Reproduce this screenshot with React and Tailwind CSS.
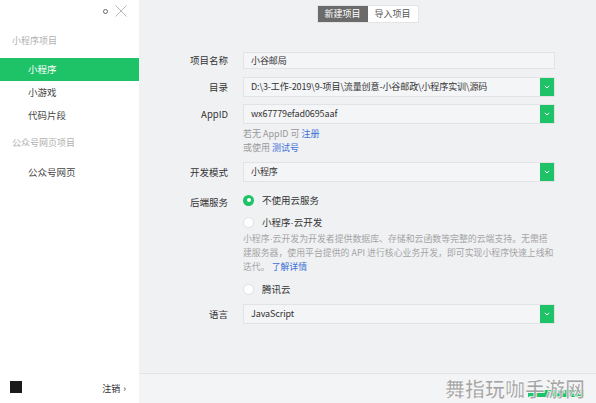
import React, { useState } from "react";

const font = { fontFamily: '"Noto Sans CJK SC", "Liberation Sans", sans-serif' };

function Chevron() {
  return (
    <svg width="6" height="4" viewBox="0 0 6 4" fill="none">
      <path d="M0.8 0.8 L3 3 L5.2 0.8" stroke="white" strokeWidth="1" />
    </svg>
  );
}

function Dot() {
  return <span style={{ fontFamily: '"Liberation Sans", sans-serif' }}>·</span>;
}

function Field({ value, dropdown, h = "h-[20px]" }) {
  return (
    <div className={`flex ${h} w-[312px] items-stretch border border-[#e2e3e5] bg-[#f4f5f6]`}>
      <div className="flex flex-1 items-center whitespace-nowrap pl-[7px] text-[9px] tracking-[-0.1px] text-[#333]">
        {value}
      </div>
      {dropdown && (
        <div className="flex w-[14px] items-center justify-center bg-[#1ec267]">
          <Chevron />
        </div>
      )}
    </div>
  );
}

function Row({ label, children, className = "" }) {
  return (
    <div className={`flex items-center ${className}`}>
      <div className="w-[90px] pr-[1px] text-right text-[9.5px] text-[#333]">{label}</div>
      <div className="ml-[14px]">{children}</div>
    </div>
  );
}

function Radio({ checked, label, onClick }) {
  return (
    <div className="flex h-[14px] cursor-pointer items-center" onClick={onClick}>
      {checked ? (
        <div className="flex h-[11px] w-[11px] items-center justify-center rounded-full bg-[#1ec267]">
          <div className="h-[4px] w-[4px] rounded-full bg-white" />
        </div>
      ) : (
        <div className="h-[11px] w-[11px] rounded-full border border-[#e0e0e0] bg-white" />
      )}
      <span className="ml-[8px] text-[9.5px] leading-[14px] text-[#333]">{label}</span>
    </div>
  );
}

export default function App() {
  const [backend, setBackend] = useState(0);
  const [tab, setTab] = useState(0);
  const [nav, setNav] = useState(0);

  const items = ["小程序", "小游戏", "代码片段"];

  return (
    <div className="flex h-[403px] w-[596px] overflow-hidden" style={font}>
      {/* sidebar */}
      <div className="flex w-[139px] flex-col bg-white">
        <div className="flex h-[22px] items-center justify-end pr-[12px]">
          <div className="h-[5px] w-[5px] rounded-full border border-[#666]" />
          <svg className="ml-[7px]" width="12" height="12" viewBox="0 0 12 12">
            <path d="M0.5 0.5 L11.5 11.5 M11.5 0.5 L0.5 11.5" stroke="#b5b5b5" strokeWidth="1" />
          </svg>
        </div>
        <div className="mt-[12px] pl-[12px] text-[9px] leading-[14px] text-[#b0b0b0]">小程序项目</div>
        <div className="mt-[10px] flex flex-col">
          {items.map((it, i) => (
            <div
              key={it}
              onClick={() => setNav(i)}
              className={`flex h-[23px] cursor-pointer items-center pl-[28px] text-[9.5px] ${
                nav === i ? "bg-[#1ec267] text-white" : "text-[#444]"
              }`}
            >
              {it}
            </div>
          ))}
        </div>
        <div className="mt-[9px] pl-[12px] text-[9px] leading-[14px] text-[#b0b0b0]">公众号网页项目</div>
        <div className="mt-[15px] pl-[28px] text-[9.5px] leading-[14px] text-[#444]">公众号网页</div>
        <div className="mt-auto mb-[8px] flex items-center justify-between pl-[10px] pr-[13px]">
          <div className="h-[12px] w-[12px] bg-[#1a1a1a]" />
          <div className="mt-[2px] flex items-center text-[9px] text-[#333]">
            注销<span className="ml-[3px] text-[9px]">›</span>
          </div>
        </div>
      </div>

      {/* main */}
      <div className="relative flex flex-1 flex-col bg-[#f0f1f3]">
        <div className="mt-[5px] flex justify-center">
          <div className="flex h-[18px] border border-[#e4e4e4] bg-white text-[9px]">
            {["新建项目", "导入项目"].map((t, i) => (
              <div
                key={t}
                onClick={() => setTab(i)}
                className={`flex w-[50px] cursor-pointer items-center justify-center ${
                  tab === i ? "bg-[#6b6b6b] text-white" : "text-[#555]"
                }`}
              >
                {t}
              </div>
            ))}
          </div>
        </div>

        <div className="mt-[29px] flex flex-col">
          <Row label="项目名称">
            <Field value="小谷邮局" h="h-[17px]" />
          </Row>
          <Row label="目录" className="mt-[8px]">
            <Field value="D:\3-工作-2019\9-项目\流量创意-小谷邮政\小程序实训\源码" dropdown />
          </Row>
          <Row label="AppID" className="mt-[7px]">
            <Field value="wx67779efad0695aaf" dropdown />
          </Row>
          <div className="ml-[104px] mt-[3px] flex flex-col text-[9px] leading-[14px] text-[#999]">
            <div>
              若无 AppID 可 <span className="text-[#3b6fd8]">注册</span>
            </div>
            <div>
              或使用 <span className="text-[#3b6fd8]">测试号</span>
            </div>
          </div>
          <Row label="开发模式" className="mt-[7px]">
            <Field value="小程序" dropdown />
          </Row>
          <div className="mt-[11px] flex">
            <div className="mt-[2px] w-[90px] pr-[1px] text-right text-[9.5px] leading-[14px] text-[#333]">后端服务</div>
            <div className="ml-[14px] flex w-[312px] flex-col">
              <Radio checked={backend === 0} label="不使用云服务" onClick={() => setBackend(0)} />
              <div className="mt-[8px]">
                <Radio
                  checked={backend === 1}
                  label={
                    <>
                      小程序<Dot />云开发
                    </>
                  }
                  onClick={() => setBackend(1)}
                />
              </div>
              <div className="mt-[3px] whitespace-nowrap text-[8.9px] leading-[14px] text-[#a5a5a5]">
                小程序<Dot />云开发为开发者提供数据库、存储和云函数等完整的云端支持。无需搭
                <br />
                建服务器，使用平台提供的 API 进行核心业务开发，即可实现小程序快速上线和
                <br />
                迭代。 <span className="text-[#3b6fd8]">了解详情</span>
              </div>
              <div className="mt-[8px]">
                <Radio checked={backend === 2} label="腾讯云" onClick={() => setBackend(2)} />
              </div>
            </div>
          </div>
          <Row label="语言" className="mt-[8px]">
            <Field value="JavaScript" dropdown />
          </Row>
        </div>

        <div className="mt-auto flex h-[30px] items-start justify-end border-t border-[#e3e4e6] bg-[#f3f4f5] pr-[12px]">
          <div className="mt-[16px] h-[7px] w-[56px] bg-[#1ec267]" />
        </div>

        <div
          className="pointer-events-none absolute bottom-[4px] right-[11px] text-[20px] font-bold leading-none text-[#a3a3a3]"
          style={{ WebkitTextStroke: "0.6px #ffffff" }}
        >
          舞指玩咖手游网
        </div>
      </div>
    </div>
  );
}
